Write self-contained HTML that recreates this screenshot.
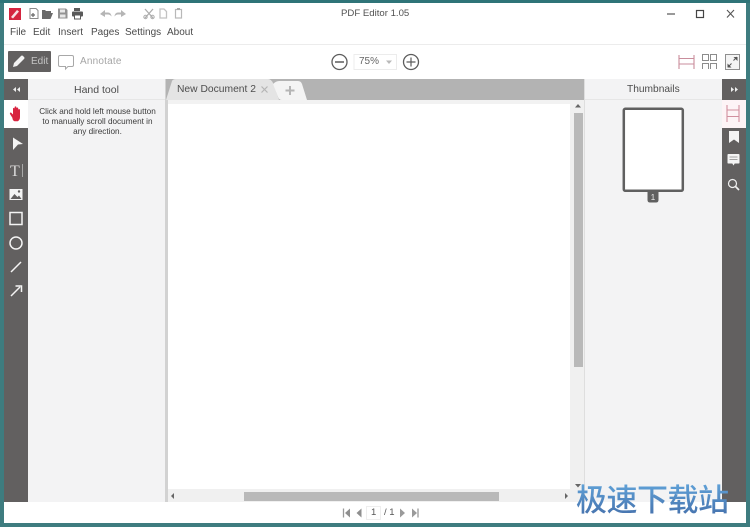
<!DOCTYPE html>
<html>
<head>
<meta charset="utf-8">
<style>
html,body{margin:0;padding:0;width:750px;height:527px;overflow:hidden;background:#3e7c7f;}
body{position:relative;font-family:"Liberation Sans","Noto Sans CJK SC",sans-serif;color:#444;}
#w{position:absolute;left:0;top:0;width:750px;height:527px;overflow:hidden;background:#3e7c7f;filter:blur(0.35px);}
.a{position:absolute;}
.t{position:absolute;white-space:nowrap;font-size:10px;line-height:12px;color:#4a4a4a;}
svg{position:absolute;left:0;top:0;}
</style>
</head>
<body>
<div id="w">
<div class="a" style="left:0;top:0;width:750px;height:3px;background:#2f7478"></div>
<div class="a" style="left:4px;top:3px;width:742px;height:520px;background:#fff"></div>
<div class="a" style="left:4px;top:44px;width:742px;height:1px;background:#ececec"></div>

<!-- panels -->
<div class="a" style="left:4px;top:79px;width:24px;height:423px;background:#626060"></div>
<div class="a" style="left:4px;top:100px;width:24px;height:28px;background:#fff"></div>
<div class="a" style="left:28px;top:79px;width:138px;height:423px;background:#f3f3f4"></div>
<div class="a" style="left:28px;top:99px;width:138px;height:1px;background:#e6e6e6"></div>
<div class="a" style="left:165px;top:79px;width:3px;height:423px;background:#d2d2d2"></div>
<div class="a" style="left:166px;top:79px;width:418px;height:21px;background:#b3b3b3"></div>
<div class="a" style="left:168px;top:100px;width:403px;height:389px;background:#fff"></div>
<div class="a" style="left:168px;top:100px;width:416px;height:4px;background:#f2f2f2"></div>
<div class="a" style="left:168px;top:104px;width:402px;height:385px;background:#fff"></div>
<div class="a" style="left:570px;top:100px;width:14px;height:402px;background:#f0f0f0"></div>
<div class="a" style="left:574px;top:113px;width:9px;height:254px;background:#b9b9b9"></div>
<div class="a" style="left:168px;top:489px;width:402px;height:13px;background:#f0f0f0"></div>
<div class="a" style="left:244px;top:492px;width:255px;height:9px;background:#b9b9b9"></div>
<div class="a" style="left:584px;top:79px;width:138px;height:423px;background:#f3f3f4"></div>
<div class="a" style="left:584px;top:79px;width:1px;height:423px;background:#dedede"></div>
<div class="a" style="left:585px;top:99px;width:137px;height:1px;background:#e6e6e6"></div>
<div class="a" style="left:722px;top:79px;width:24px;height:423px;background:#626060"></div>
<div class="a" style="left:722px;top:100px;width:24px;height:28px;background:#fdf4f6"></div>

<!-- edit button -->
<div class="a" style="left:8px;top:51px;width:43px;height:21px;background:#626060;border-radius:1px"></div>

<svg width="750" height="527" viewBox="0 0 750 527">
  <!-- tabs -->
  <path d="M166 100 L172 81 Q173 79 176 79 L268 79 Q271 79 273 83 L279 100 Z" fill="#e4e4e4"/>
  <path d="M273 84 Q276 81 279 81 L298 81 Q301 81 302 84 L307 100 L282 100 Q279 100 278 97 Z" fill="#f4f4f4"/>
  <path d="M261.500 86.500 l6 6 M267.500 86.500 l-6 6" stroke="#b5b5b5" stroke-width="1.200"/>
  <path d="M290 86 v9 M285.500 90.500 h9" stroke="#b5b5b5" stroke-width="2"/>

  <!-- logo -->
  <rect x="9" y="8" width="12" height="12" fill="#d4243f"/>
  <path d="M11 17 l6 -7 l2 1.500 l-6 7 z" fill="#f7dfe3"/>
  <!-- file icons -->
  <path d="M30 8.500 h6 l2 2 v8 h-8 z" fill="none" stroke="#8a8a8a" stroke-width="1"/>
  <path d="M31 15 h4 M33 13 v4" stroke="#666" stroke-width="1.200"/>
  <path d="M42 19 v-9 h3 l1 1 h5 v2 h2 l-2.500 6 z" fill="#6a6a6a"/>
  <path d="M58 8.500 h8 l1.500 1.500 v8.500 h-9.500 z" fill="#939393"/>
  <rect x="60" y="9.500" width="5" height="3" fill="#e8e8e8"/><rect x="60" y="14.500" width="5.500" height="3" fill="#e8e8e8"/>
  <rect x="74" y="8" width="6" height="3" fill="#5a5a5a"/>
  <rect x="72" y="11.500" width="11" height="5" rx="1" fill="#5a5a5a"/>
  <rect x="74.500" y="15" width="6" height="4" fill="#fff" stroke="#5a5a5a"/>
  <!-- undo redo -->
  <path d="M100 14 l5 -4 v2.500 h3 q3 0 3.500 4 q-1.500 -2 -3.500 -2 h-3 v2.500 z" fill="#b5b5b5"/>
  <path d="M126 14 l-5 -4 v2.500 h-3 q-3 0 -3.500 4 q1.500 -2 3.500 -2 h3 v2.500 z" fill="#b5b5b5"/>
  <!-- cut copy paste -->
  <path d="M145 9 l8 9 M153 9 l-8 9" stroke="#adadad" stroke-width="1.300"/>
  <circle cx="145.500" cy="17" r="1.700" fill="none" stroke="#adadad"/><circle cx="152.500" cy="17" r="1.700" fill="none" stroke="#adadad"/>
  <path d="M160 9 h4 l2.500 2.500 v6.500 h-6.500 z" fill="none" stroke="#c2c2c2" stroke-width="1.300"/>
  <rect x="175.500" y="9.500" width="6" height="8.500" fill="none" stroke="#b8b8b8" stroke-width="1.200"/>
  <rect x="177" y="8" width="3" height="2" fill="#aaa"/>

  <!-- window controls -->
  <path d="M667 14 h8" stroke="#555" stroke-width="1.200"/>
  <rect x="696.500" y="10.500" width="7" height="7" fill="none" stroke="#444" stroke-width="1.200"/>
  <path d="M727 10 l7 7.500 M734 10 l-7 7.500" stroke="#555" stroke-width="1.100"/>

  <!-- pencil -->
  <path d="M13 67 l1 -4 l7 -7 q1 -1 2 0 l1 1 q1 1 0 2 l-7 7 z" fill="#f3f3f3"/>
  <!-- annotate bubble -->
  <path d="M60 55.500 h12 q1.500 0 1.500 1.500 v8 q0 1.500 -1.500 1.500 h-4 l-2.500 2.500 v-2.500 h-5.500 q-1.500 0 -1.500 -1.500 v-8 q0 -1.500 1.500 -1.500 z" fill="none" stroke="#a8a8a8" stroke-width="1"/>

  <!-- zoom -->
  <circle cx="339.500" cy="62" r="7.500" fill="none" stroke="#5c5c5c" stroke-width="1.300"/>
  <path d="M335 62 h9" stroke="#5c5c5c" stroke-width="1.500"/>
  <circle cx="411" cy="62" r="7.500" fill="none" stroke="#5c5c5c" stroke-width="1.300"/>
  <path d="M411 57.500 v9 M406.500 62 h9" stroke="#5c5c5c" stroke-width="1.200"/>
  <rect x="354" y="54.500" width="42.500" height="15" fill="#fff" stroke="#ececec"/>
  <path d="M386 60.500 h6 l-3 3.500 z" fill="#b9b9b9"/>

  <!-- view icons -->
  <path d="M679 55 v14 M694 55 v14 M679 58.500 h15 M679 64 h15" stroke="#c98d9c" stroke-width="1.100" fill="none"/>
  <rect x="702.500" y="54.500" width="6" height="6" fill="none" stroke="#8c8c8c"/>
  <rect x="710.500" y="54.500" width="6" height="6" fill="none" stroke="#8c8c8c"/>
  <path d="M702.500 69 v-5.500 h6 v5.500 M710.500 69 v-5.500 h6 v5.500" fill="none" stroke="#8c8c8c"/>
  <rect x="725.500" y="54.500" width="14" height="15" fill="#f4f4f4" stroke="#8f8f8f"/>
  <path d="M728 67 l3.500 -3.500 M737 57 l-3.500 3.500" stroke="#555" stroke-width="1"/>
  <path d="M727.500 63.500 v4 h4 z M737.500 61 v-4 h-4 z" fill="#555"/>

  <!-- collapse arrows -->
  <path d="M16 87 l-3 2.500 l3 2.500 z M20 87 l-3 2.500 l3 2.500 z" fill="#eee"/>
  <path d="M731 87 l3 2.500 l-3 2.500 z M735 87 l3 2.500 l-3 2.500 z" fill="#eee"/>

  <!-- hand -->
  <path d="M12.500 118 l-2.500 -4 q-0.500 -1.500 1 -1.500 l2 2 v-6 q0.800 -1.200 1.600 0 v-1.500 q0.900 -1.200 1.800 0 v1 q1 -1 1.800 0 v1.500 q0.900 -0.800 1.800 0 v7.500 q0 3 -2.200 4.200 h-3.300 q-1.500 -0.500 -2 -2.200 z" fill="#d8233f"/>
  <!-- tools -->
  <path d="M13 137.500 l10 6.500 l-5 0.500 l-5 5.500 z" fill="#f4f4f4"/>
  <text x="10" y="176" font-family="Liberation Serif" font-size="16" fill="#d9d9d9">T</text>
  <path d="M22.500 164 v13" stroke="#a8a8a8" stroke-width="1"/>
  <rect x="9.500" y="189" width="13" height="11" fill="#f4f4f4"/>
  <path d="M10.500 199 l4 -5 l3 3 l1.500 -1.500 l2.500 3.500 z" fill="#626060"/>
  <circle cx="19" cy="191.500" r="1.200" fill="#626060"/>
  <rect x="10" y="212.500" width="12" height="12" fill="none" stroke="#f4f4f4" stroke-width="1.500"/>
  <circle cx="16" cy="243" r="6" fill="none" stroke="#f4f4f4" stroke-width="1.500"/>
  <path d="M11 272 l10 -10" stroke="#f4f4f4" stroke-width="1.500"/>
  <path d="M11 296 l9 -9" stroke="#f4f4f4" stroke-width="1.500"/>
  <path d="M15.500 286 h6 v6" fill="none" stroke="#f4f4f4" stroke-width="1.500"/>

  <!-- right sidebar icons -->
  <path d="M727 105 v17 M739 105 v17 M727 110 h12 M727 116.500 h12" stroke="#d1909f" stroke-width="1.100" fill="none"/>
  <path d="M729 131 h10 v12 l-5 -3.500 l-5 3.500 z" fill="#f4f4f4"/>
  <rect x="727.500" y="154" width="12" height="9.500" rx="0.800" fill="#f4f4f4"/>
  <path d="M732 163 l1.500 2.500 l1.500 -2.500 z" fill="#f4f4f4"/>
  <path d="M729.500 157 h8 M729.500 159.500 h8" stroke="#888" stroke-width="0.800"/>
  <circle cx="732.500" cy="183.500" r="4" fill="none" stroke="#f0f0f0" stroke-width="1.200"/>
  <path d="M735.500 186.500 l3.500 3.500" stroke="#f0f0f0" stroke-width="1.700"/>

  <!-- thumbnail -->
  <rect x="623.800" y="108.800" width="59" height="82" rx="1.500" fill="#fff" stroke="#606060" stroke-width="2.500"/>
  <path d="M647.500 192 h11 v8 q0 2.500 -2.500 2.500 h-6 q-2.500 0 -2.500 -2.500 z" fill="#606060"/>

  <!-- scroll arrows -->
  <path d="M575 107.500 h6 l-3 -3.500 z" fill="#666"/>
  <path d="M575 484 h6 l-3 3.500 z" fill="#666"/>
  <path d="M174 493 v6 l-3 -3 z" fill="#666"/>
  <path d="M565 493 v6 l3 -3 z" fill="#666"/>

  <!-- pager -->
  <path d="M343.500 508.500 v9" stroke="#999" stroke-width="1.300"/>
  <path d="M350 508.500 v9 l-5 -4.500 z" fill="#8f8f8f"/>
  <path d="M361.500 508.500 v9 l-5 -4.500 z" fill="#8f8f8f"/>
  <rect x="366.500" y="506.500" width="14" height="13" fill="#fff" stroke="#eee"/>
  <path d="M400 508.500 v9 l5 -4.500 z" fill="#9a9a9a"/>
  <path d="M412 508.500 v9 l5 -4.500 z" fill="#9a9a9a"/>
  <path d="M418 508.500 v9" stroke="#999" stroke-width="1.300"/>
</svg>

<!-- text -->
<div class="t" style="left:341px;top:8px;font-size:9.600px;color:#505050">PDF Editor 1.05</div>
<div class="t" style="left:10px;top:27px">File</div>
<div class="t" style="left:33px;top:27px">Edit</div>
<div class="t" style="left:58px;top:27px">Insert</div>
<div class="t" style="left:91px;top:27px">Pages</div>
<div class="t" style="left:125px;top:27px">Settings</div>
<div class="t" style="left:167px;top:27px">About</div>
<div class="t" style="left:31px;top:56px;color:#c4c4c4">Edit</div>
<div class="t" style="left:80px;top:56px;color:#a5a5a5;letter-spacing:.2px">Annotate</div>
<div class="t" style="left:359px;top:56px;color:#666">75%</div>
<div class="t" style="left:74px;top:84px;color:#4d4d4d;font-size:10.500px">Hand tool</div>
<div class="t" style="left:177px;top:84px;color:#4d4d4d;font-size:10.300px">New Document 2</div>
<div class="t" style="left:627px;top:84px;color:#4d4d4d;font-size:10.200px">Thumbnails</div>
<div class="t" style="left:29px;top:107px;width:137px;text-align:center;font-size:8.200px;line-height:10px;color:#3b3b3b;white-space:normal">Click and hold left mouse button<br>to manually scroll document in<br>any direction.</div>
<div class="t" style="left:647px;top:192px;width:12px;text-align:center;font-size:8px;line-height:11px;color:#eee">1</div>
<div class="t" style="left:371px;top:507px;color:#555;font-size:9.500px">1</div>
<div class="t" style="left:384px;top:507px;color:#555;font-size:9.500px">/ 1</div>

<!-- watermark -->
<div class="a" style="left:576px;top:480px;white-space:nowrap;font-family:'Noto Sans CJK SC','WenQuanYi Zen Hei',sans-serif;font-size:31px;line-height:36px;font-weight:500;letter-spacing:-0.500px;color:#5a91c4;background:linear-gradient(#62a6dc,#4672ad);-webkit-background-clip:text;background-clip:text;-webkit-text-fill-color:transparent">极速下载站</div>
</div>
</body>
</html>
